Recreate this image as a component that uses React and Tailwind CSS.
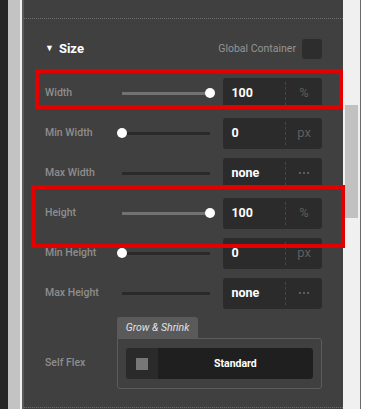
import React from "react";

const rows = [
  { label: "Width", value: "100", unit: "%", fill: true },
  { label: "Min Width", value: "0", unit: "px", fill: false, thumb: "start" },
  { label: "Max Width", value: "none", unit: "dots", fill: false },
  { label: "Height", value: "100", unit: "%", fill: true },
  { label: "Min Height", value: "0", unit: "px", fill: false, thumb: "start" },
  { label: "Max Height", value: "none", unit: "dots", fill: false },
];

function Slider({ fill, thumb }) {
  return (
    <div className="relative h-[10px] w-[89px] flex items-center">
      <div className={fill ? "h-[3px] w-full bg-[#727272]" : "h-[3px] w-full bg-[#2a2a2a]"} />
      {fill ? (
        <div className="absolute right-[-5px] top-0 h-[10px] w-[10px] rounded-full bg-white" />
      ) : null}
      {thumb === "start" ? (
        <div className="absolute left-[-5px] top-0 h-[10px] w-[10px] rounded-full bg-white" />
      ) : null}
    </div>
  );
}

function Row({ row }) {
  return (
    <div className="flex h-[40px] items-center">
      <div className="w-[77px] text-[10.5px] font-medium text-[#8e8e8e]">{row.label}</div>
      <Slider fill={row.fill} thumb={row.thumb} />
      <div className="ml-[13px] flex h-[31px] w-[99px] items-center rounded-[3px] bg-[#2b2b2b]">
        <div className="flex-1 pl-[8px] text-[12.5px] font-bold text-white">{row.value}</div>
        <div className="h-[23px] border-l border-dashed border-[#464646]" />
        <div className="flex w-[36px] items-center justify-center text-[13px] text-[#5e5e5e]">
          {row.unit === "dots" ? (
            <span className="flex gap-[2px]">
              <span className="h-[2px] w-[2px] bg-[#5e5e5e]" />
              <span className="h-[2px] w-[2px] bg-[#5e5e5e]" />
              <span className="h-[2px] w-[2px] bg-[#5e5e5e]" />
            </span>
          ) : (
            row.unit
          )}
        </div>
      </div>
    </div>
  );
}

export default function App() {
  return (
    <div
      className="relative flex h-[409px] w-[367px] overflow-hidden bg-white"
      style={{ fontFamily: 'Roboto, "Open Sans", sans-serif' }}
    >
      <div className="w-[8px] bg-[#262626]" />
      <div className="w-[12px] bg-[#c3c3c3]" />
      <div className="w-[2px] bg-[#efefef]" />
      <div className="w-[2px] bg-[#5a5a5a]" />

      <div className="flex w-[319px] flex-col bg-[#404040]">
        <div className="h-[19px] border-b border-dotted border-[#6e6e6e]" />
        <div className="flex flex-col px-[21px]">
          <div className="mt-[20px] flex h-[20px] items-center justify-between">
            <div className="flex items-center gap-[5px]">
              <span className="text-[9px] text-white">▼</span>
              <span className="text-[13px] font-bold text-white">Size</span>
            </div>
            <div className="flex items-center gap-[6px]">
              <span className="text-[10.5px] text-[#959595]">Global Container</span>
              <div className="h-[20px] w-[20px] rounded-[3px] bg-[#2d2d2d]" />
            </div>
          </div>

          <div className="mt-[14px] flex flex-col">
            {rows.map((row) => (
              <Row key={row.label} row={row} />
            ))}
          </div>

          <div className="mt-[4px] flex">
            <div className="flex w-[72px] items-end pb-[18px] text-[10.5px] font-medium text-[#8e8e8e]">
              Self Flex
            </div>
            <div className="flex w-[206px] flex-col">
              <div className="flex h-[21px] w-[81px] items-center rounded-t-[3px] bg-[#5a5a5a] pl-[9px] text-[10.5px] italic text-[#e2e2e2]">
                Grow &amp; Shrink
              </div>
              <div className="rounded-b-[3px] rounded-tr-[3px] border border-[#5c5c5c] px-[8px] py-[9px]">
                <div className="flex h-[31px] overflow-hidden rounded-[3px]">
                  <div className="flex w-[32px] items-center justify-center bg-[#2a2a2a]">
                    <div className="h-[12px] w-[12px] bg-[#777777]" />
                  </div>
                  <div className="flex flex-1 items-center justify-center bg-[#1f1f1f] text-[10.5px] font-bold text-white">
                    Standard
                  </div>
                </div>
              </div>
            </div>
          </div>
        </div>
        <div className="mt-[18px] border-b border-dotted border-[#6e6e6e]" />
      </div>

      <div className="relative w-[17px] bg-[#f0f0f0]">
        <div className="absolute left-[2px] top-[105px] h-[113px] w-[13px] bg-[#c1c1c1]" />
      </div>
      <div className="w-[1px] bg-[#6a6a6a]" />
      <div className="flex-1 bg-white" />

      <div className="absolute left-[35px] top-[69px] h-[40px] w-[308px] border-[4px] border-[#e50000]" />
      <div className="absolute left-[31px] top-[185px] h-[63px] w-[314px] border-[4px] border-[#e50000]" />
    </div>
  );
}
